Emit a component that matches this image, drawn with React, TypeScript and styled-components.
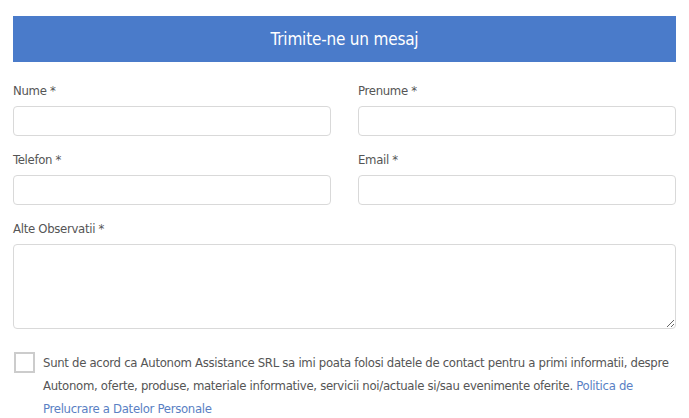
import React from "react";
import styled, { createGlobalStyle } from "styled-components";

const Global = createGlobalStyle`
  html, body { margin: 0; padding: 0; background: #ffffff; }
  body { font-family: "DejaVu Sans Condensed", "Liberation Sans", sans-serif; }
  * { box-sizing: border-box; }
`;

const Page = styled.div`
  padding: 16px 13px 0 13px;
  width: 689px;
`;

const Banner = styled.h2`
  margin: 0 0 19px 0;
  height: 46px;
  background: #4a7bca;
  color: #ffffff;
  font-weight: 400;
  font-size: 17px;
  letter-spacing: -0.2px;
  display: flex;
  align-items: center;
  justify-content: center;
`;

const Grid = styled.div`
  display: grid;
  grid-template-columns: 1fr 1fr;
  column-gap: 27px;
  row-gap: 14px;
`;

const Field = styled.div<{ $wide?: boolean }>`
  display: flex;
  flex-direction: column;
  grid-column: ${(p) => (p.$wide ? "1 / -1" : "auto")};
`;

const Label = styled.label`
  font-size: 13px;
  letter-spacing: -0.3px;
  line-height: 20px;
  color: #555555;
  margin-bottom: 5px;
`;

const Input = styled.input`
  height: 30px;
  border: 1px solid #d9d9d9;
  border-radius: 4px;
  background: #ffffff;
  outline: none;
`;

const Area = styled.textarea`
  height: 85px;
  border: 1px solid #d9d9d9;
  border-radius: 4px;
  background: #ffffff;
  outline: none;
  resize: vertical;
`;

const Consent = styled.div`
  display: flex;
  align-items: flex-start;
  gap: 8px;
  margin-top: 23px;
  padding-left: 1px;
`;

const Box = styled.span`
  flex: 0 0 auto;
  width: 21px;
  height: 21px;
  border: 2px solid #cccccc;
  background: #ffffff;
`;

const ConsentText = styled.p`
  margin: -1px 0 0 0;
  font-size: 13px;
  letter-spacing: -0.3px;
  line-height: 23px;
  color: #555555;
`;

const Link = styled.a`
  color: #5a7fc4;
  text-decoration: none;
`;

export default function App() {
  return (
    <>
      <Global />
      <Page>
        <Banner>Trimite-ne un mesaj</Banner>
        <Grid>
          <Field>
            <Label>Nume *</Label>
            <Input />
          </Field>
          <Field>
            <Label>Prenume *</Label>
            <Input />
          </Field>
          <Field>
            <Label>Telefon *</Label>
            <Input />
          </Field>
          <Field>
            <Label>Email *</Label>
            <Input />
          </Field>
          <Field $wide>
            <Label>Alte Observatii *</Label>
            <Area />
          </Field>
        </Grid>
        <Consent>
          <Box />
          <ConsentText>
            Sunt de acord ca Autonom Assistance SRL sa imi poata folosi datele de contact pentru a primi informatii, despre
            Autonom, oferte, produse, materiale informative, servicii noi/actuale si/sau evenimente oferite.{" "}
            <Link href="#">Politica de Prelucrare a Datelor Personale</Link>
          </ConsentText>
        </Consent>
      </Page>
    </>
  );
}
